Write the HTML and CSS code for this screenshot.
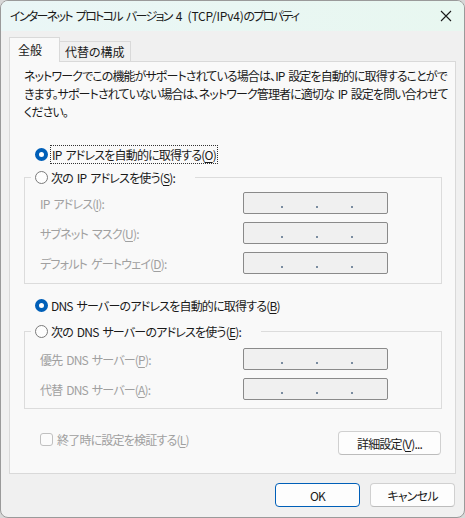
FILE: index.html
```html
<!DOCTYPE html>
<html lang="ja">
<head>
<meta charset="utf-8">
<link rel="stylesheet" href="styles.css">
</head>
<body>
<div class="window">
  <div class="titlebar">
    <span class="title">インターネット プロトコル バージョン <span class="lat">4 (TCP/IPv4)</span>のプロパティ</span>
    <svg class="close" width="12" height="12" viewBox="0 0 12 12"><path d="M1 1L11 11M11 1L1 11" stroke="#1a1a1a" stroke-width="1.1" fill="none"/></svg>
  </div>
  <div class="content">
    <div class="tabs">
      <div class="tab active">全般</div>
      <div class="tab">代替の構成</div>
    </div>
    <div class="panel">
      <p class="intro">ネットワークでこの機能がサポートされている場合は、IP 設定を自動的に取得することがで<br>きます。サポートされていない場合は、ネットワーク管理者に適切な IP 設定を問い合わせて<br>ください。</p>

      <div class="radio-row first"><span class="radio on"></span><span class="focus">IP アドレスを自動的に取得する(<u>O</u>)</span></div>
      <fieldset class="group">
        <legend><span class="radio-row"><span class="radio"></span><span>次の IP アドレスを使う(<u>S</u>):</span></span></legend>
        <div class="field"><span class="lbl">IP アドレス(<u>I</u>):</span><span class="ip"><i></i><i></i><i></i></span></div>
        <div class="field"><span class="lbl">サブネット マスク(<u>U</u>):</span><span class="ip"><i></i><i></i><i></i></span></div>
        <div class="field"><span class="lbl">デフォルト ゲートウェイ(<u>D</u>):</span><span class="ip"><i></i><i></i><i></i></span></div>
      </fieldset>

      <div class="radio-row dns"><span class="radio on"></span><span>DNS サーバーのアドレスを自動的に取得する(<u>B</u>)</span></div>
      <fieldset class="group second">
        <legend><span class="radio-row"><span class="radio"></span><span>次の DNS サーバーのアドレスを使う(<u>E</u>):</span></span></legend>
        <div class="field"><span class="lbl">優先 DNS サーバー(<u>P</u>):</span><span class="ip"><i></i><i></i><i></i></span></div>
        <div class="field"><span class="lbl">代替 DNS サーバー(<u>A</u>):</span><span class="ip"><i></i><i></i><i></i></span></div>
      </fieldset>

      <div class="bottom-row">
        <div class="check-row"><span class="check"></span><span>終了時に設定を検証する(<u>L</u>)</span></div>
        <button class="btn adv">詳細設定(<u>V</u>)...</button>
      </div>
    </div>
    <div class="footer">
      <button class="btn primary">OK</button>
      <button class="btn">キャンセル</button>
    </div>
  </div>
</div>
</body>
</html>
```
FILE: styles.css
```css
* { box-sizing: border-box; }
html, body { margin: 0; padding: 0; background: #d8d8d8; }
body {
  font-family: "Noto Sans CJK JP", "Noto Sans", sans-serif;
  font-size: 12px;
  font-feature-settings: "palt";
  letter-spacing: -0.8px;
  word-spacing: 2px;
  color: #1a1a1a;
}
u { text-decoration: underline; text-underline-offset: 2px; }
.window {
  width: 465px;
  height: 518px;
  border: 1px solid #9a9a9a;
  border-radius: 8px;
  overflow: hidden;
  background: #f0f0f0;
  display: flex;
  flex-direction: column;
}
.titlebar {
  height: 30px;
  flex: none;
  display: flex;
  align-items: center;
  justify-content: space-between;
  padding: 0 12px 0 9px;
  background: linear-gradient(90deg, #eaf6f6, #e8f7f0);
}
.title { line-height: 16px; letter-spacing: -1.7px; word-spacing: 3px; }
.title .lat { letter-spacing: -0.2px; }
.close { display: block; }
.content { padding: 6px 8px 0 8px; flex: 1; display: flex; flex-direction: column; }
.tabs { display: flex; align-items: flex-end; height: 24px; }
.tab {
  height: 20px;
  padding: 0 5px;
  line-height: 19px;
  border: 1px solid #d9d9d9;
  border-bottom: none;
  background: #f0f0f0;
  margin-left: -1px;
  letter-spacing: 0;
}
.tab.active {
  height: 25px;
  width: 51px;
  margin-left: 0;
  background: #f9f9f9;
  padding: 2px 8px 0;
  position: relative;
  z-index: 1;
  margin-bottom: -1px;
}
.panel {
  height: 413px;
  border: 1px solid #d9d9d9;
  background: #f9f9f9;
  padding: 5px 13px 0 14px;
}
.intro { margin: 0; line-height: 18px; white-space: nowrap; letter-spacing: -0.9px; }
.radio-row { display: flex; align-items: center; height: 20px; }
.radio-row.first { margin-top: 23px; margin-left: 11px; }
.radio {
  width: 13px; height: 13px; border-radius: 50%;
  border: 1px solid #7a7a7a; background: #fdfdfd;
  margin-right: 3px; flex: none;
}
.radio.on {
  border: 4px solid #005fb8;
  background: #fff;
}
.focus { outline: 1px dotted #333; outline-offset: 0; padding: 0 1px; }
.group {
  margin: 3px 0 0 0;
  padding: 5px 14px 9px 15px;
  border: 1px solid #dcdcdc;
  width: 418px;
}
.group legend { padding: 0 20px 0 4px; margin-left: -9px; }
.field { display: flex; align-items: center; justify-content: space-between; height: 22px; margin-bottom: 8px; color: #a0a0a0; padding-right: 39px; }
.field:last-child { margin-bottom: 0; }
.ip {
  width: 145px; height: 22px;
  border: 1px solid #8a8a8a; border-radius: 2px;
  background: #f0f0f0;
  position: relative;
}
.ip i {
  position: absolute; top: 13px;
  width: 2px; height: 2px; background: #7a8ca0;
}
.ip i:nth-child(1) { left: 37px; }
.ip i:nth-child(2) { left: 72px; }
.ip i:nth-child(3) { left: 107px; }
.radio-row.dns { margin-top: 11px; margin-left: 11px; }
.group.second { margin-top: 6px; padding-top: 7px; padding-bottom: 8px; }
.bottom-row { display: flex; justify-content: space-between; align-items: flex-start; margin-top: 20px; padding-left: 16px; padding-right: 1px; }
.check-row { display: flex; align-items: center; color: #a0a0a0; height: 20px; }
.check { width: 13px; height: 13px; border: 1px solid #c0c0c0; border-radius: 3px; background: #fbfbfb; margin-right: 4px; }
.btn {
  font: inherit; font-feature-settings: "palt";
  letter-spacing: -0.8px;
  color: #1a1a1a;
  height: 24px; padding: 0;
  border: 1px solid #d0d0d0; border-bottom-color: #bcbcbc;
  border-radius: 4px; background: #fdfdfd;
}
.adv { width: 103px; margin-top: 2px; }
.footer { display: flex; justify-content: flex-end; gap: 10px; padding: 9px 1px 0 0; }
.footer .btn { width: 85px; }
.btn.primary { border: 1px solid #005fb8; box-shadow: inset 0 0 0 1px #fdfdfd; }
```
